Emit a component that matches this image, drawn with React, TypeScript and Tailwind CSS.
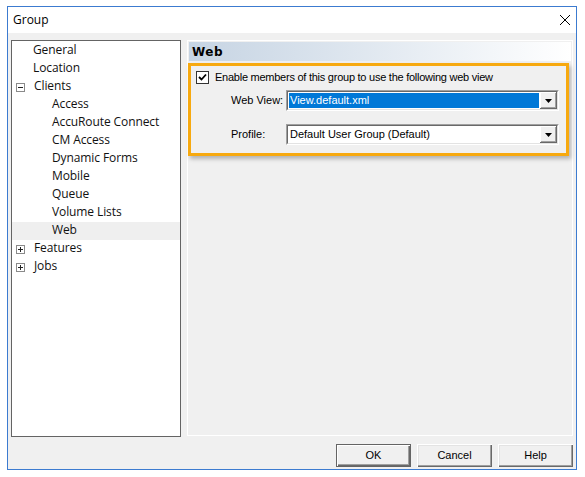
import React from "react";

const treeFont = { fontFamily: '"Open Sans", "Noto Sans", sans-serif' };

function Expander({ minus }: { minus: boolean }) {
  return (
    <span className="relative inline-block w-[9px] h-[9px] border border-[#8a8a8a] bg-white mr-[9px]">
      <span className="absolute left-[1px] top-[3px] w-[5px] h-[1px] bg-[#222]" />
      {!minus && <span className="absolute left-[3px] top-[1px] w-[1px] h-[5px] bg-[#222]" />}
    </span>
  );
}

function TreeRow({
  label,
  level,
  expander,
  selected,
}: {
  label: string;
  level: number;
  expander?: "plus" | "minus";
  selected?: boolean;
}) {
  return (
    <div
      className={`h-[18px] flex items-center text-[12px] tracking-[-0.1px] text-[#111] leading-none ${selected ? "bg-[#efefef]" : ""}`}
      style={{ paddingLeft: level === 0 ? (expander ? 4 : 21) : 40 }}
    >
      {expander && <Expander minus={expander === "minus"} />}
      <span className="relative top-[-1px]">{label}</span>
    </div>
  );
}

function DropButton() {
  return (
    <div className="w-[17px] h-[17px] bg-[#f0f0f0] flex items-center justify-center shadow-[inset_-1px_-1px_0_#696969,inset_1px_1px_0_#ffffff,inset_-2px_-2px_0_#a0a0a0]">
      <svg width="7" height="4" viewBox="0 0 7 4">
        <polygon points="0,0 7,0 3.5,4" fill="#000" />
      </svg>
    </div>
  );
}

function Select({ value, highlighted }: { value: string; highlighted?: boolean }) {
  return (
    <div className="w-[273px] h-[21px] border-t border-l border-t-[#a0a0a0] border-l-[#a0a0a0] border-b border-r border-b-white border-r-white">
      <div className="h-full border-t border-l border-t-[#696969] border-l-[#696969] border-b border-r border-b-[#e3e3e3] border-r-[#e3e3e3] bg-white flex items-center pl-[1px] pr-0">
        <div className={`flex-1 h-[15px] flex items-center pl-[1px] ${highlighted ? "bg-[#0078d7] text-white" : "text-black"}`}>
          <span className="text-[11px] leading-none whitespace-nowrap">{value}</span>
        </div>
        <div className="ml-[1px]">
          <DropButton />
        </div>
      </div>
    </div>
  );
}

function Btn({ label, def }: { label: string; def?: boolean }) {
  return (
    <div
      className={`w-[75px] h-[23px] flex items-center justify-center text-[11px] text-black bg-[#f0f0f0] ${
        def
          ? "border border-[#646464] shadow-[inset_1px_1px_0_#ffffff,inset_-1px_-1px_0_#696969,inset_-2px_-2px_0_#a0a0a0]"
          : "shadow-[inset_1px_1px_0_#ffffff,inset_-1px_-1px_0_#696969,inset_-2px_-2px_0_#a0a0a0,inset_2px_2px_0_#e3e3e3]"
      }`}
      style={{ fontFamily: '"Liberation Sans", Arial, sans-serif' }}
    >
      {label}
    </div>
  );
}

export default function App() {
  return (
    <div className="w-[585px] h-[477px] bg-white pt-[6px] pl-[7px]">
      <div className="w-[570px] h-[464px] border border-[#3c7bd0] flex flex-col bg-[#f0f0f0]">
        <div className="h-[26px] bg-white flex items-center justify-between pl-[5px] pr-[3px]">
          <span className="text-[12px] text-black" style={{ fontFamily: '"Open Sans", "Noto Sans", sans-serif' }}>
            Group
          </span>
          <svg width="12" height="12" viewBox="0 0 12 12" className="mr-[2px]">
            <path d="M1 1 L11 11 M11 1 L1 11" stroke="#000" strokeWidth="1" />
          </svg>
        </div>
        <div className="flex-1 flex flex-col px-[3px] pt-[7px] pb-[2px]">
          <div className="flex gap-[6px] h-[397px]">
            <div className="w-[170px] h-full border border-[#646464] bg-white pt-[1px]" style={treeFont}>
              <TreeRow label="General" level={0} />
              <TreeRow label="Location" level={0} />
              <TreeRow label="Clients" level={0} expander="minus" />
              <TreeRow label="Access" level={1} />
              <TreeRow label="AccuRoute Connect" level={1} />
              <TreeRow label="CM Access" level={1} />
              <TreeRow label="Dynamic Forms" level={1} />
              <TreeRow label="Mobile" level={1} />
              <TreeRow label="Queue" level={1} />
              <TreeRow label="Volume Lists" level={1} />
              <TreeRow label="Web" level={1} selected />
              <TreeRow label="Features" level={0} expander="plus" />
              <TreeRow label="Jobs" level={0} expander="plus" />
            </div>
            <div
              className="flex-1 h-[396px] border border-white flex flex-col"
              style={{ fontFamily: '"Liberation Sans", Arial, sans-serif' }}
            >
              <div className="h-[19px] mx-[1px] mt-[1px] bg-gradient-to-r from-[#c6d4e3] to-white flex items-center pl-[3px]">
                <span className="font-bold text-black tracking-[0.5px]" style={{ fontFamily: '"DejaVu Sans", sans-serif', fontSize: 12 }}>
                  Web
                </span>
              </div>
              <div className="mt-[2px] ml-0 w-[381px] h-[93px] border-[3px] border-[#f7a90f] shadow-[2px_3px_4px_rgba(0,0,0,0.25)] pt-[4px]">
                <div className="flex items-center pl-[5px] h-[14px]">
                  <div className="w-[13px] h-[13px] bg-white border border-[#333] flex items-center justify-center">
                    <svg width="9" height="9" viewBox="0 0 9 9">
                      <path d="M1 4 L3.5 6.5 L8 1.5" stroke="#000" strokeWidth="1.8" fill="none" />
                    </svg>
                  </div>
                  <span className="ml-[6px] text-[11px] tracking-[-0.25px] text-black leading-none whitespace-nowrap">
                    Enable members of this group to use the following web view
                  </span>
                </div>
                <div className="flex items-center mt-[6px] pl-[40px]">
                  <span className="w-[55px] text-[11px] text-black leading-none whitespace-nowrap">Web View:</span>
                  <Select value="View.default.xml" highlighted />
                </div>
                <div className="flex items-center mt-[13px] pl-[40px]">
                  <span className="w-[55px] text-[11px] text-black leading-none whitespace-nowrap">Profile:</span>
                  <Select value="Default User Group (Default)" />
                </div>
              </div>
            </div>
          </div>
          <div className="flex justify-end gap-[6px] mt-[7px] pr-[0px]">
            <Btn label="OK" def />
            <Btn label="Cancel" />
            <Btn label="Help" />
          </div>
        </div>
      </div>
    </div>
  );
}
